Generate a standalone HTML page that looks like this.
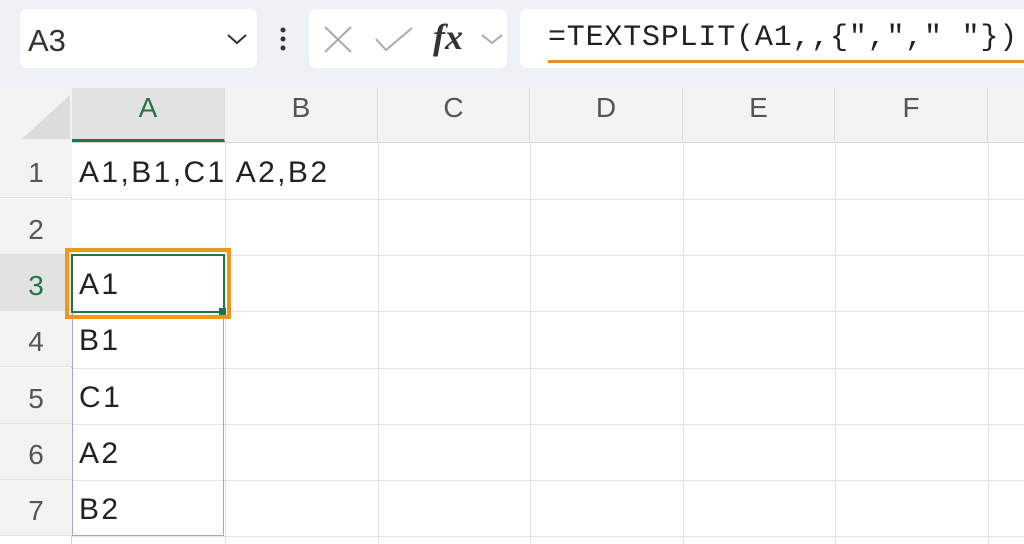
<!DOCTYPE html>
<html><head><style>
body{margin:0;width:1024px;height:544px;overflow:hidden;background:#fff;font-family:"Liberation Sans",sans-serif;position:relative}
.abs{position:absolute}
.top{left:0;top:0;width:1024px;height:88px;background:#eef1f5}
.box{background:#fff;border-radius:8px}
.hdr{top:88px;height:54px;background:#f3f3f3;border-bottom:1px solid #d4d4d4}
.col{position:absolute;top:88px;height:54px;line-height:40px;text-align:center;font-size:28px;color:#555;border-right:1px solid #dcdcdc;box-sizing:border-box;padding-top:0}
.rowh{position:absolute;left:0;width:72px;height:56px;text-align:center;font-size:28px;color:#555;background:#f3f3f3;line-height:62px;border-bottom:1px solid #e0e0e0;box-sizing:border-box}
.vl{position:absolute;top:142px;width:1px;height:402px;background:#e2e2e2}
.hl{position:absolute;left:72px;width:952px;height:1px;background:#e2e2e2}
.t{position:absolute;font-size:30px;letter-spacing:2.4px;color:#222;left:79px}
</style></head><body>
<div class="abs top"></div>
<div class="abs box" style="left:20px;top:9px;width:237px;height:59px"></div>
<div class="abs" style="left:28px;top:23px;font-size:31px;color:#333">A3</div>
<svg class="abs" style="left:226px;top:32px" width="22" height="14"><path d="M2 3 L11 11 L20 3" stroke="#333" stroke-width="2" fill="none"/></svg>
<svg class="abs" style="left:278px;top:26px" width="10" height="28"><circle cx="5" cy="4" r="2.5" fill="#333"/><circle cx="5" cy="13" r="2.5" fill="#333"/><circle cx="5" cy="22" r="2.5" fill="#333"/></svg>
<div class="abs box" style="left:309px;top:9px;width:198px;height:59px"></div>
<svg class="abs" style="left:320px;top:24px" width="40" height="30"><path d="M5 3 L31 28 M31 3 L5 28" stroke="#aaa" stroke-width="2" fill="none"/></svg>
<svg class="abs" style="left:372px;top:24px" width="44" height="30"><path d="M4 15 L14 26 L40 4" stroke="#aaa" stroke-width="2" fill="none"/></svg>
<div class="abs" style="left:433px;top:16px;font-family:'Liberation Serif',serif;font-style:italic;font-weight:bold;font-size:36px;color:#333">fx</div>
<svg class="abs" style="left:480px;top:32px" width="24" height="14"><path d="M2 3 L12 11 L22 3" stroke="#aaa" stroke-width="2" fill="none"/></svg>
<div class="abs box" style="left:520px;top:9px;width:520px;height:59px"></div>
<div class="abs" style="left:548px;top:21px;font-family:'Liberation Mono',monospace;font-size:30px;letter-spacing:0.8px;color:#222;white-space:pre">=TEXTSPLIT(A1,,{","," "})</div>
<div class="abs" style="left:548px;top:60px;width:476px;height:3px;background:#e8902a"></div>

<div class="abs hdr" style="left:0;width:1024px"></div>
<svg class="abs" style="left:18px;top:95px" width="54" height="46"><path d="M52 0 L52 44 L4 44 Z" fill="#dcdcdc"/></svg>
<div class="col" style="left:72px;width:153px;background:#e2e2e2;color:#227447;border-bottom:3px solid #227447;height:54px">A</div>
<div class="col" style="left:225px;width:153px">B</div>
<div class="col" style="left:378px;width:152px">C</div>
<div class="col" style="left:530px;width:153px">D</div>
<div class="col" style="left:683px;width:152px">E</div>
<div class="col" style="left:835px;width:153px">F</div>
<div class="col" style="left:988px;width:60px"></div>

<div class="abs" style="left:71px;top:142px;width:1px;height:402px;background:#d4d4d4"></div>
<div class="vl" style="left:225px"></div><div class="vl" style="left:378px"></div><div class="vl" style="left:530px"></div><div class="vl" style="left:683px"></div><div class="vl" style="left:835px"></div><div class="vl" style="left:988px"></div>
<div class="hl" style="top:199px"></div><div class="hl" style="top:255px"></div><div class="hl" style="top:311px"></div><div class="hl" style="top:368px"></div><div class="hl" style="top:424px"></div><div class="hl" style="top:480px"></div><div class="hl" style="top:536px"></div>

<div class="rowh" style="top:142px">1</div>
<div class="rowh" style="top:199px">2</div>
<div class="rowh" style="top:255px;background:#e2e2e2;color:#227447">3</div>
<div class="rowh" style="top:311px">4</div>
<div class="rowh" style="top:368px">5</div>
<div class="rowh" style="top:424px">6</div>
<div class="rowh" style="top:480px">7</div>

<div class="abs" style="left:72px;top:311px;width:152px;height:225px;border:1px solid #8faad8;border-top:none;box-sizing:border-box"></div>
<div class="abs" style="left:65px;top:248px;width:166px;height:71px;border:4px solid #f0961e;box-sizing:border-box"></div>
<div class="abs" style="left:71px;top:254px;width:154px;height:59px;border:2px solid #227447;box-sizing:border-box"></div>
<div class="abs" style="left:219px;top:308px;width:7px;height:7px;background:#227447"></div>

<div class="t" style="top:156px">A1,B1,C1 A2,B2</div>
<div class="t" style="top:268px">A1</div>
<div class="t" style="top:324px">B1</div>
<div class="t" style="top:381px">C1</div>
<div class="t" style="top:437px">A2</div>
<div class="t" style="top:493px">B2</div>
</body></html>
